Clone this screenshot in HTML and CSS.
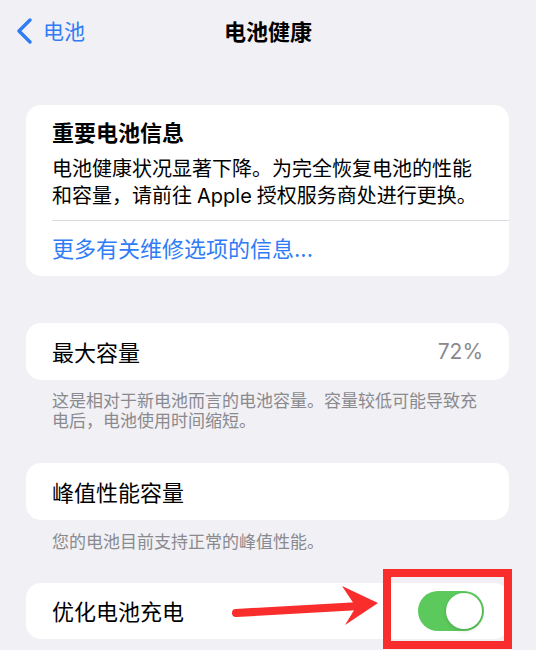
FILE: index.html
```html
<!DOCTYPE html>
<html lang="zh-CN">
<head>
<meta charset="utf-8">
<title>电池健康</title>
<link rel="stylesheet" href="styles.css">
</head>
<body>
<div class="screen">
  <header class="nav">
    <div class="back">
      <svg class="chev" width="16" height="26" viewBox="0 0 16 26"><path d="M14 2 L3 13 L14 24" fill="none" stroke="#2f7cf6" stroke-width="3.4" stroke-linecap="round" stroke-linejoin="round"/></svg>
      <span class="back-text">电池</span>
    </div>
    <h1 class="title">电池健康</h1>
    <div></div>
  </header>

  <section class="card info">
    <div class="info-main">
      <h2 class="info-title">重要电池信息</h2>
      <p class="info-body">电池健康状况显著下降。为完全恢复电池的性能和容量，请前往&#x2005;Apple&#x2005;授权服务商处进行更换。</p>
    </div>
    <div class="sep"></div>
    <div class="info-link">更多有关维修选项的信息...</div>
  </section>

  <section class="card row">
    <span class="label">最大容量</span>
    <span class="value">72%</span>
  </section>
  <p class="foot foot1">这是相对于新电池而言的电池容量。容量较低可能导致充电后，电池使用时间缩短。</p>

  <section class="card row">
    <span class="label">峰值性能容量</span>
  </section>
  <p class="foot foot2">您的电池目前支持正常的峰值性能。</p>

  <section class="card row row-last">
    <span class="label">优化电池充电</span>
    <span class="toggle"><span class="knob"></span></span>
  </section>

  <div class="redbox"></div>
  <svg class="arrow" width="170" height="60" viewBox="0 0 170 60">
    <path d="M16 33 L140 26" stroke="#f92d2b" stroke-width="8" stroke-linecap="round" fill="none"/>
    <polygon points="122,6 158,23 125,45 136,27" fill="#f92d2b"/>
  </svg>
</div>
</body>
</html>
```

FILE: styles.css
```css
html, body {
  margin: 0;
  padding: 0;
}
body {
  background: #f0f0f5;
  font-family: Inter, "Noto Sans CJK SC", sans-serif;
  color: #000;
  width: 536px;
  height: 650px;
  overflow: hidden;
}
.screen {
  position: relative;
  width: 536px;
  height: 650px;
}
.nav {
  height: 62px;
  display: grid;
  grid-template-columns: 1fr auto 1fr;
  align-items: center;
}
.back {
  display: flex;
  align-items: center;
  padding-left: 16px;
  gap: 11px;
  color: #2f7cf6;
}
.chev {
  display: block;
}
.back-text {
  font-size: 21px;
  line-height: 1;
  padding-top: 1px;
}
.title {
  margin: 0;
  font-size: 22px;
  font-weight: 600;
  line-height: 1;
  padding-top: 1px;
}
.card {
  background: #fff;
  border-radius: 15px;
  margin: 0 27px 0 26px;
}
.info {
  margin-top: 43px;
}
.info-main {
  padding: 14px 26px 10px 26px;
}
.info-title {
  margin: 0 0 9px 0;
  font-size: 22px;
  font-weight: 700;
  line-height: 28px;
}
.info-body {
  margin: 0;
  font-size: 20px;
  line-height: 27px;
}
.sep {
  height: 1px;
  background: #dcdce0;
  margin-left: 26px;
}
.info-link {
  padding: 14px 26px 13px 26px;
  font-size: 22px;
  line-height: 28px;
  color: #2f7cf6;
}
.row {
  height: 57px;
  display: flex;
  align-items: center;
  justify-content: space-between;
  padding: 0 25px 0 26px;
  box-sizing: border-box;
}
.info + .row {
  margin-top: 47px;
}
.label {
  font-size: 22px;
  line-height: 28px;
  padding-top: 2px;
}
.value {
  font-size: 21px;
  color: #8a8a8e;
  line-height: 28px;
  padding-right: 1px;
}
.foot {
  margin: 0;
  padding: 0 50px 0 52px;
  font-size: 17px;
  line-height: 20px;
  color: #8a8a8e;
}
.foot1 {
  margin-top: 11px;
  margin-bottom: 32px;
}
.foot2 {
  margin-top: 12px;
  margin-bottom: 31px;
}
.row-last {
  height: 56px;
}
.toggle {
  width: 66px;
  height: 40px;
  border-radius: 20px;
  background: #5cc95c;
  position: relative;
  flex: none;
}
.knob {
  position: absolute;
  right: 2px;
  top: 2px;
  width: 36px;
  height: 36px;
  border-radius: 50%;
  background: #fff;
  box-shadow: 0 0 0 0.5px rgba(0,0,0,0.08), 0 2px 4px rgba(0,0,0,0.12);
}
.redbox {
  position: absolute;
  left: 383px;
  top: 569px;
  width: 129px;
  height: 80px;
  box-sizing: border-box;
  border: 8px solid #f92d2b;
}
.arrow {
  position: absolute;
  left: 220px;
  top: 580px;
}
```
